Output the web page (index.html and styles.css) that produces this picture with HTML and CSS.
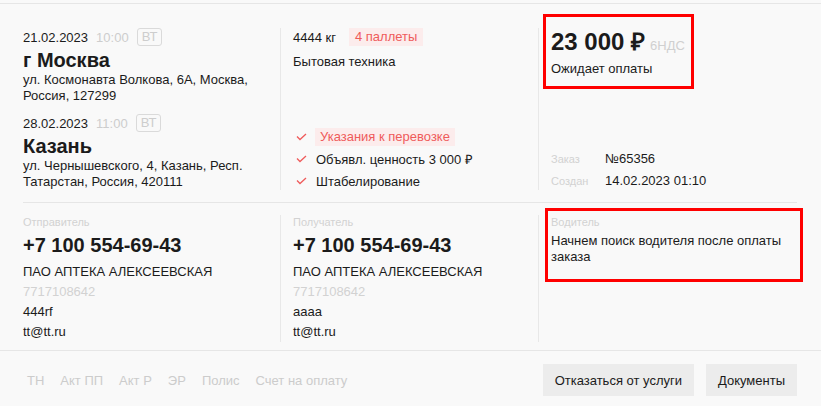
FILE: index.html
```html
<!DOCTYPE html>
<html lang="ru">
<head>
    <meta charset="UTF-8">
    <meta name="viewport" content="width=device-width, initial-scale=1.0">
    <title>Заказ №65356</title>
    <link rel="stylesheet" href="styles.css">
</head>
<body>

<div class="order">
    <!-- Route, cargo and price -->
    <div class="order-top">
        <div class="col route">
            <div class="point">
                <div class="point-date">21.02.2023 <span class="time">10:00</span> <span class="day">ВТ</span></div>
                <div class="city">г Москва</div>
                <div class="address">ул. Космонавта Волкова, 6А, Москва, Россия, 127299</div>
            </div>
            <div class="point">
                <div class="point-date">28.02.2023 <span class="time">11:00</span> <span class="day">ВТ</span></div>
                <div class="city">Казань</div>
                <div class="address">ул. Чернышевского, 4, Казань, Респ. Татарстан, Россия, 420111</div>
            </div>
        </div>

        <div class="col cargo">
            <div class="cargo-weight">4444 кг <span class="tag">4 паллеты</span></div>
            <div class="cargo-type">Бытовая техника</div>
            <ul class="checks">
                <li><svg class="check" width="11" height="8" viewBox="0 0 11 8"><path d="M1 3.5 L4 6.5 L10 1" fill="none" stroke="#ef5b5b" stroke-width="1.3"/></svg><span class="tag">Указания к перевозке</span></li>
                <li><svg class="check" width="11" height="8" viewBox="0 0 11 8"><path d="M1 3.5 L4 6.5 L10 1" fill="none" stroke="#ef5b5b" stroke-width="1.3"/></svg><span>Объявл. ценность 3 000 ₽</span></li>
                <li><svg class="check" width="11" height="8" viewBox="0 0 11 8"><path d="M1 3.5 L4 6.5 L10 1" fill="none" stroke="#ef5b5b" stroke-width="1.3"/></svg><span>Штабелирование</span></li>
            </ul>
        </div>

        <div class="col summary">
            <div class="price-box">
                <div class="price">23 000 ₽<span class="vat">6НДС</span></div>
                <div class="status">Ожидает оплаты</div>
            </div>
            <div class="meta">
                <div class="meta-row"><span class="label">Заказ</span>№65356</div>
                <div class="meta-row"><span class="label">Создан</span>14.02.2023 01:10</div>
            </div>
        </div>
    </div>

    <!-- Contacts -->
    <div class="order-contacts">
        <div class="col">
            <div class="label">Отправитель</div>
            <div class="phone">+7 100 554-69-43</div>
            <div class="contact-line company">ПАО АПТЕКА АЛЕКСЕЕВСКАЯ</div>
            <div class="contact-line muted">7717108642</div>
            <div class="contact-line">444rf</div>
            <div class="contact-line">tt@tt.ru</div>
        </div>
        <div class="col">
            <div class="label">Получатель</div>
            <div class="phone">+7 100 554-69-43</div>
            <div class="contact-line company">ПАО АПТЕКА АЛЕКСЕЕВСКАЯ</div>
            <div class="contact-line muted">7717108642</div>
            <div class="contact-line">аааа</div>
            <div class="contact-line">tt@tt.ru</div>
        </div>
        <div class="col">
            <div class="driver-box">
                <div class="label">Водитель</div>
                <div class="driver-text">Начнем поиск водителя после оплаты заказа</div>
            </div>
        </div>
    </div>

    <!-- Documents and actions -->
    <div class="order-footer">
        <div class="docs">
            <a href="#">ТН</a>
            <a href="#">Акт ПП</a>
            <a href="#">Акт Р</a>
            <a href="#">ЭР</a>
            <a href="#">Полис</a>
            <a href="#">Счет на оплату</a>
        </div>
        <div class="actions">
            <button type="button">Отказаться от услуги</button>
            <button type="button">Документы</button>
        </div>
    </div>
</div>

</body>
</html>
```

FILE: styles.css
```css
body {
    margin: 0;
    padding-top: 3px;
    background-color: #f9f9f9;
    font-family: "Liberation Sans", Arial, sans-serif;
    font-size: 13px;
    color: #1b1b1b;
}

.order {
    border-top: 1px solid #e6e6e6;
}

.order-top,
.order-contacts {
    display: grid;
    grid-template-columns: 257px 258px 1fr;
    margin: 0 24px 0 23px;
}

.order-top {
    padding: 24px 0 12px;
    border-bottom: 1px solid #e6e6e6;
}

.order-contacts {
    padding: 12px 0 8px;
}

.col + .col {
    border-left: 1px solid #e8e8e8;
    padding-left: 12px;
}

.col {
    display: flex;
    flex-direction: column;
}

/* route */

.point + .point {
    margin-top: 10px;
}

.point-date {
    display: flex;
    align-items: center;
    gap: 8px;
    height: 18px;
}

.time {
    color: #cdcdcd;
}

.day {
    height: 16px;
    line-height: 16px;
    padding: 0 4px;
    border: 1px solid #dadada;
    border-radius: 3px;
    color: #cdcdcd;
}

.city {
    margin-top: 3px;
    font-size: 20px;
    font-weight: bold;
    line-height: 23px;
}

.address {
    line-height: 16px;
}

/* cargo */

.cargo-weight {
    display: flex;
    align-items: center;
    gap: 13px;
    height: 18px;
}

.tag {
    display: inline-block;
    height: 18px;
    line-height: 18px;
    padding: 0 6px;
    background-color: #fcecec;
    color: #ef5b5b;
}

.cargo-type {
    margin-top: 8px;
    line-height: 16px;
}

.checks {
    list-style: none;
    margin: auto 0 0;
    padding: 0;
}

.checks li {
    display: flex;
    align-items: center;
    height: 18px;
}

.checks li + li {
    margin-top: 4px;
}

.checks li span {
    padding-left: 1px;
}

.checks li .tag {
    padding: 0 5px;
}

.check {
    flex: none;
    margin: 0 8px 0 3px;
}

/* summary */

.price-box {
    box-sizing: border-box;
    width: 151px;
    margin: -14px 0 0 -8px;
    padding: 11px 0 9px 5px;
    border: 3px solid #ff0000;
}

.price {
    font-size: 24px;
    font-weight: bold;
    line-height: 28px;
    white-space: nowrap;
}

.vat {
    margin-left: 5px;
    font-size: 13px;
    font-weight: normal;
    color: #d0d0d0;
}

.status {
    margin-top: 1px;
    line-height: 16px;
}

.meta {
    margin-top: auto;
}

.meta-row {
    line-height: 18px;
}

.meta-row + .meta-row {
    margin-top: 4px;
}

.meta-row .label {
    display: inline-block;
    width: 54px;
}

/* contacts */

.label {
    font-size: 11px;
    line-height: 14px;
    color: #d2d2d2;
}

.phone {
    margin-top: 4px;
    font-size: 20px;
    font-weight: bold;
    line-height: 24px;
}

.contact-line {
    line-height: 20px;
}

.company {
    margin-top: 5px;
}

.muted {
    color: #d2d2d2;
}

.driver-box {
    margin: -7px -6px 0;
    padding: 4px 3px 14px;
    border: 3px solid #ff0000;
}

.driver-text {
    margin-top: 4px;
    line-height: 16px;
}

/* footer */

.order-footer {
    display: flex;
    justify-content: space-between;
    align-items: center;
    padding: 13px 24px 0 27px;
    border-top: 1px solid #e6e6e6;
}

.docs {
    display: flex;
    gap: 16px;
}

.docs a {
    color: #cccccc;
    text-decoration: none;
}

.actions {
    display: flex;
    gap: 12px;
}

button {
    height: 32px;
    padding: 0 12px;
    border: none;
    background-color: #ececec;
    font-family: inherit;
    font-size: 13px;
    color: #1b1b1b;
    cursor: pointer;
}

button:hover {
    background-color: #e2e2e2;
}
```
